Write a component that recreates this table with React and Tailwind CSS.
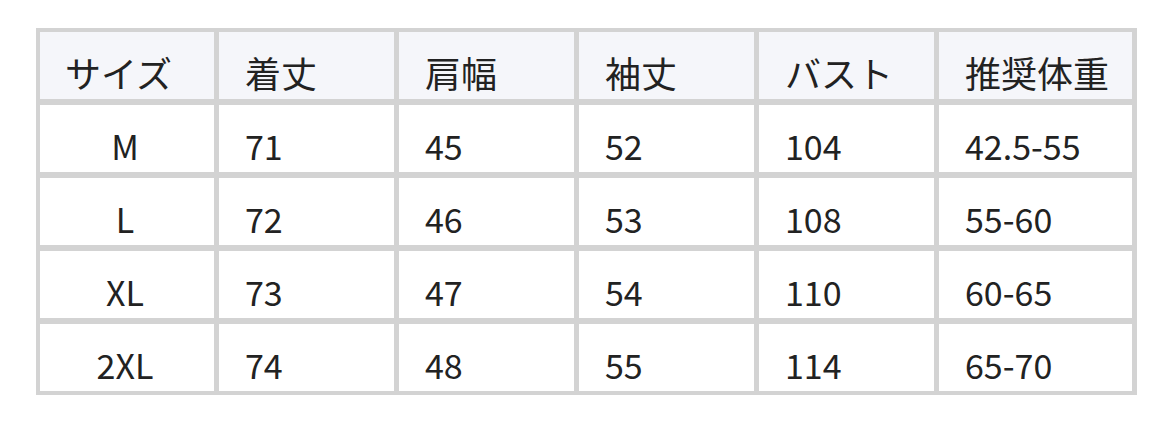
import React from 'react';

const headers = ['サイズ', '着丈', '肩幅', '袖丈', 'バスト', '推奨体重'];

const rows = [
    ['M', '71', '45', '52', '104', '42.5-55'],
    ['L', '72', '46', '53', '108', '55-60'],
    ['XL', '73', '47', '54', '110', '60-65'],
    ['2XL', '74', '48', '55', '114', '65-70'],
];

const SizeTable = () => {
    return (
        <div className="ml-[36px] mt-[28px] w-[1101px] bg-[#d3d3d3] pt-[4px] pl-[4px] pr-[5px] pb-[4px]">
            <div className="grid grid-cols-[174px_175px_175px_175px_175px_193px] gap-x-[5px] gap-y-[6px]">
                {/* Header */}
                {headers.map((h, i) => (
                    <div
                        key={h}
                        className={`h-[67px] overflow-hidden bg-[#f5f6fa] pt-[15px] text-[36px] leading-[51px] ${i === 0 ? 'pl-[25px]' : 'pl-[26px]'}`}
                    >
                        {h}
                    </div>
                ))}

                {/* Body */}
                {rows.map((row) =>
                    row.map((cell, i) => (
                        <div
                            key={row[0] + i}
                            className={`h-[67px] bg-white pt-[16px] leading-[49px] ${i === 0 ? 'text-center pr-[4px]' : 'pl-[26px]'}`}
                        >
                            {cell}
                        </div>
                    ))
                )}
            </div>
        </div>
    );
};

export default function App() {
    return (
        <div
            className="w-[1172px] h-[422px] bg-white text-[34px] text-[#222222]"
            style={{ fontFamily: '"Noto Sans CJK JP", "Noto Sans", sans-serif' }}
        >
            <div className="pt-px -mt-px">
                <SizeTable />
            </div>
        </div>
    );
}
